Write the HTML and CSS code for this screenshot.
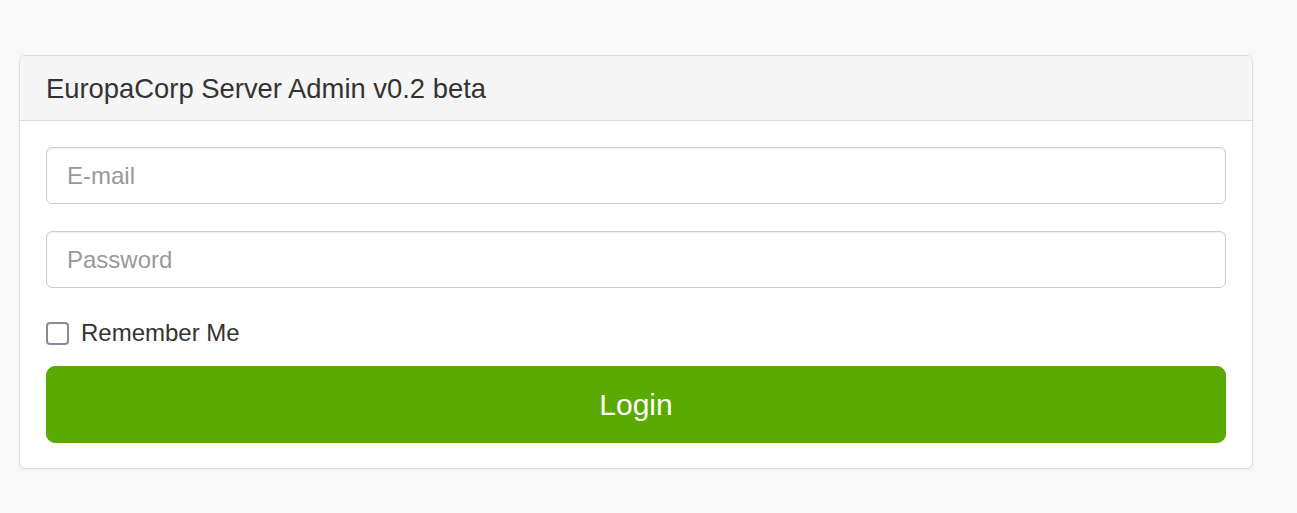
FILE: index.html
```html
<!DOCTYPE html>
<html lang="en">
<head>
<meta charset="utf-8">
<title>EuropaCorp Server Admin</title>
<link rel="stylesheet" href="styles.css">
</head>
<body>
<div class="page">
  <div class="panel">
    <div class="panel-heading">
      <h3 class="panel-title">EuropaCorp Server Admin v0.2 beta</h3>
    </div>
    <div class="panel-body">
      <form class="login-form">
        <div class="form-group">
          <input class="form-control" type="email" placeholder="E-mail">
        </div>
        <div class="form-group">
          <input class="form-control" type="password" placeholder="Password">
        </div>
        <label class="checkbox">
          <span class="box"></span>
          <span class="label-text">Remember Me</span>
        </label>
        <button class="btn-login" type="button">Login</button>
      </form>
    </div>
  </div>
</div>
</body>
</html>
```
FILE: styles.css
```css
* { box-sizing: border-box; }
html, body { margin: 0; padding: 0; }
body {
  background: #f8f8f8;
  font-family: "Liberation Sans", Arial, sans-serif;
  color: #333;
  height: 513px;
}
.page {
  padding: 55px 44px 0 19px;
}
.panel {
  background: #fff;
  border: 1px solid #ddd;
  border-radius: 6px;
  box-shadow: 0 1px 2px rgba(0,0,0,0.05);
  overflow: hidden;
}
.panel-heading {
  background: #f5f5f5;
  border-bottom: 1px solid #ddd;
  padding: 18px 26px 16px;
}
.panel-title {
  margin: 0;
  font-size: 27.4px;
  font-weight: normal;
  line-height: 30px;
  color: #333;
}
.panel-body {
  padding: 26px 26px 25px 26px;
}
.login-form { display: flex; flex-direction: column; }
.form-group { margin-bottom: 27px; }
.form-group:nth-child(2) { margin-bottom: 28px; }
.form-control {
  display: block;
  width: 100%;
  height: 57px;
  padding: 0 20px;
  font-family: "Liberation Sans", Arial, sans-serif;
  font-size: 24px;
  color: #555;
  background: #fff;
  border: 1px solid #ccc;
  border-radius: 6px;
  box-shadow: inset 0 1px 2px rgba(0,0,0,0.075);
  outline: none;
}
.form-control::placeholder { color: #999; }
.checkbox {
  display: flex;
  align-items: center;
  height: 34px;
  margin-bottom: 16px;
  font-size: 24px;
  cursor: pointer;
}
.box {
  width: 23px;
  height: 23px;
  border: 2px solid #8a8a99;
  border-radius: 4px;
  background: #fff;
  margin-right: 12px;
}
.label-text { line-height: 34px; }
.btn-login {
  display: block;
  width: 100%;
  height: 77px;
  background: #5aaa00;
  border: 1px solid #58a600;
  border-radius: 9px;
  color: #fff;
  font-family: "Liberation Sans", Arial, sans-serif;
  font-size: 30px;
  cursor: pointer;
}
```
